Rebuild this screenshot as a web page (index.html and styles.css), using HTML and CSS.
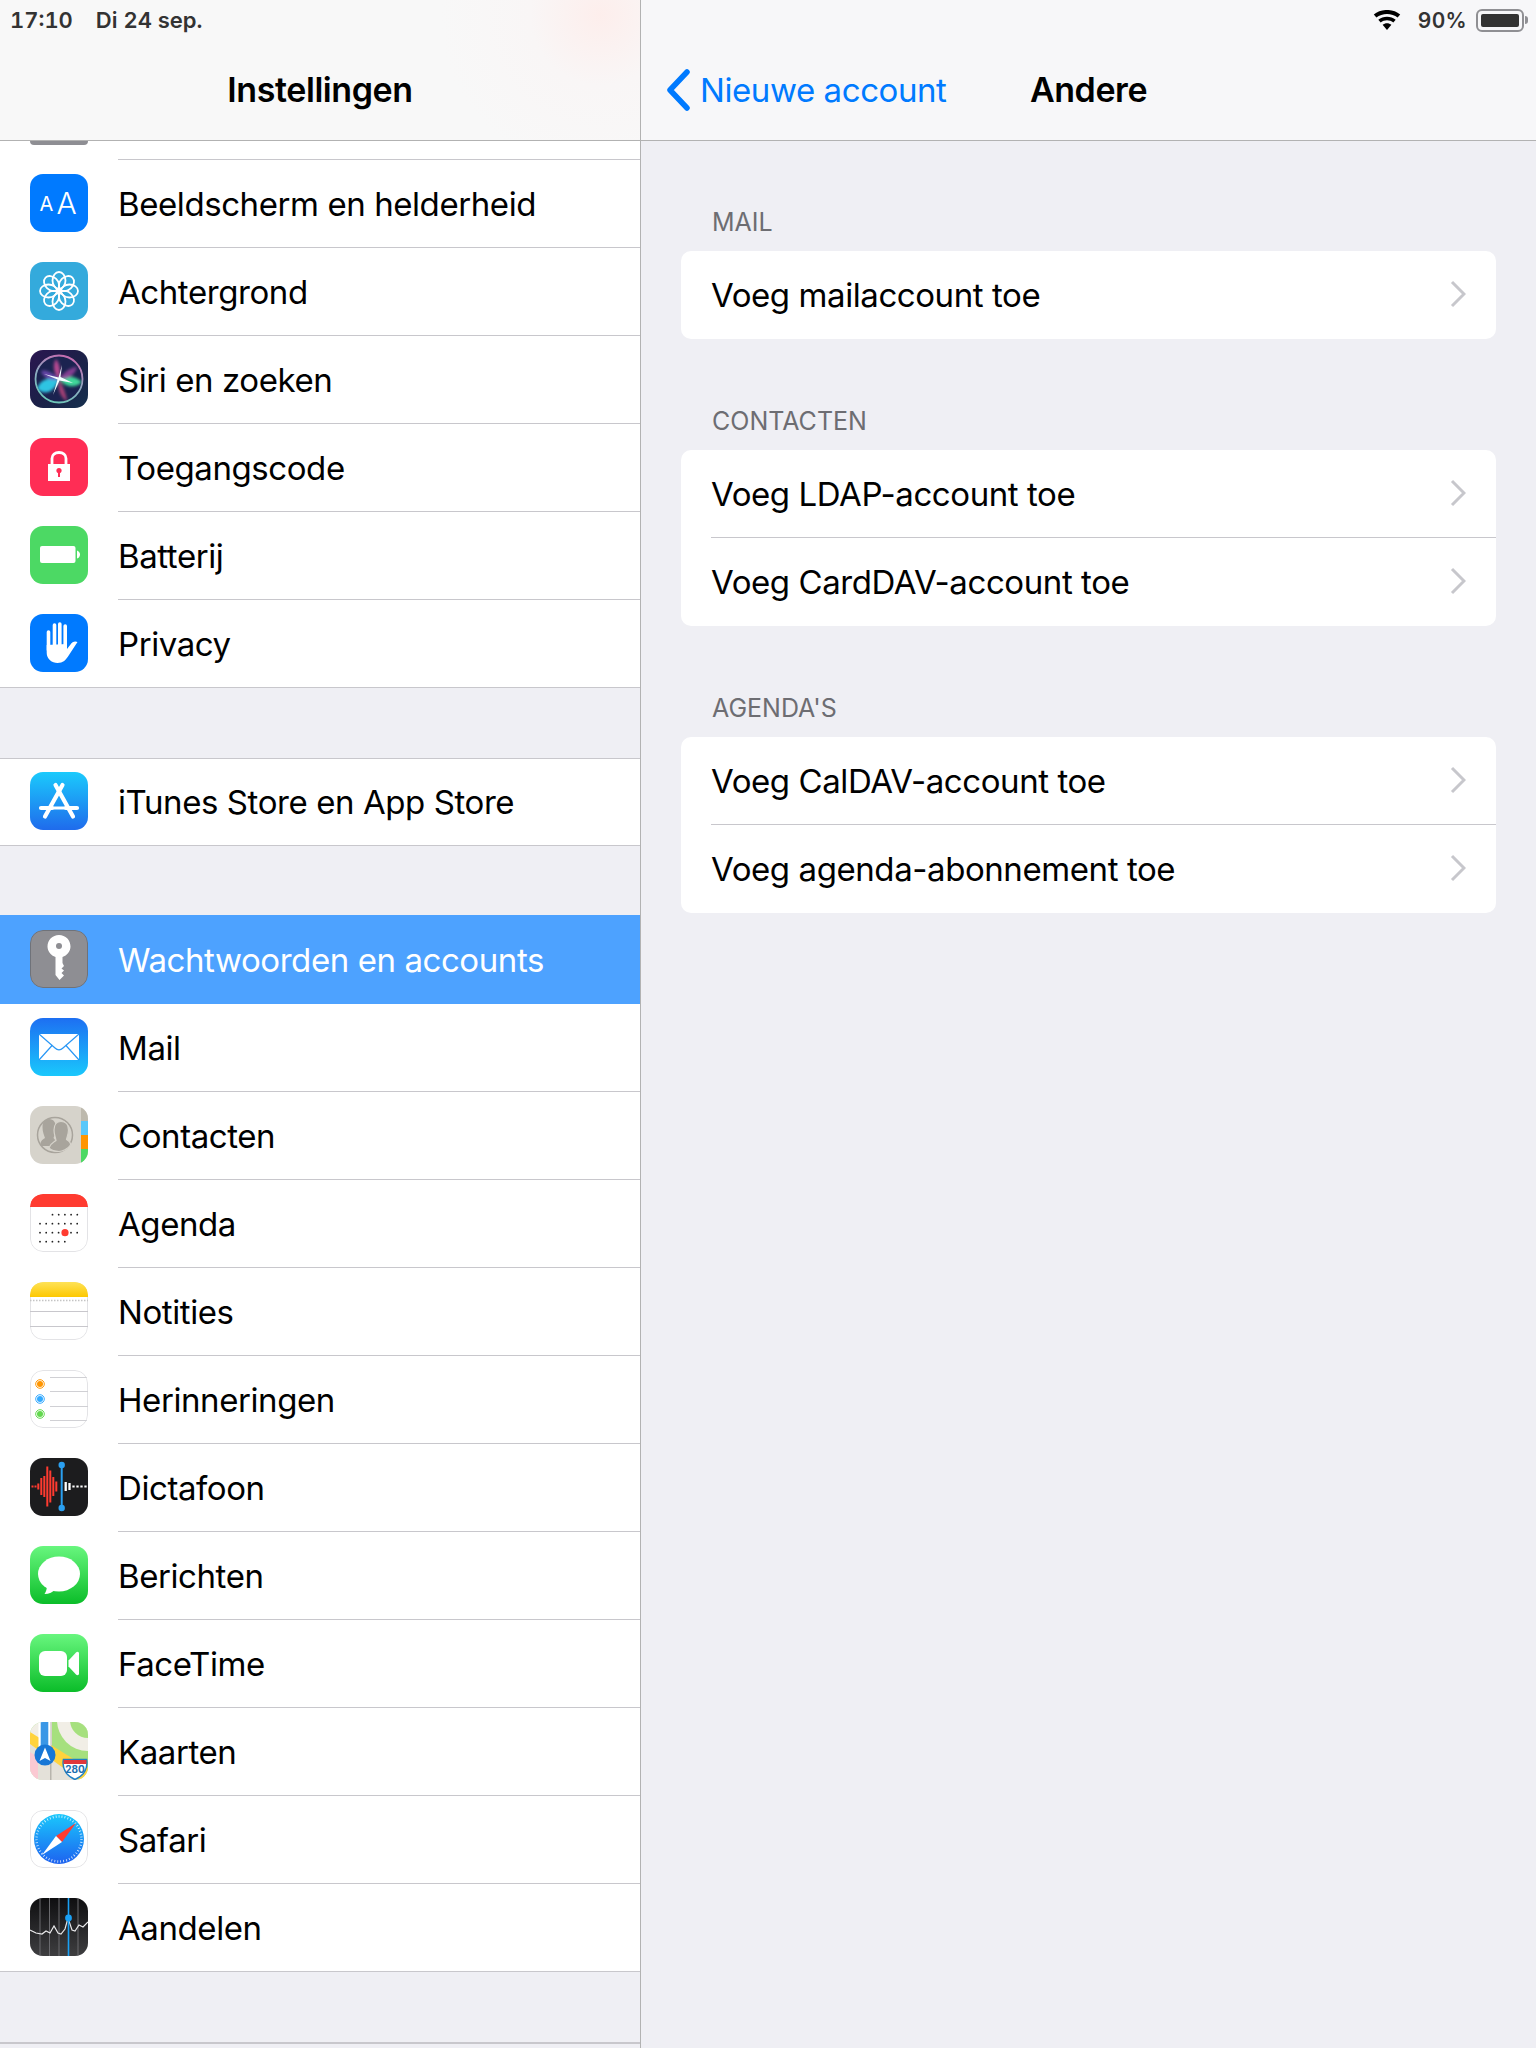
FILE: index.html
```html
<!DOCTYPE html>
<html lang="nl">
<head>
    <meta charset="UTF-8">
    <title>Instellingen</title>
    <link rel="stylesheet" href="styles.css">
</head>
<body>
<div class="screen">
    <aside class="sidebar">
        <header class="bar sidebar-bar">
            <div class="status">
                <span class="time">17:10</span>
                <span>Di 24 sep.</span>
            </div>
            <h1 class="nav-title">Instellingen</h1>
        </header>

        <div class="peek"><div class="peek-icon"></div></div>

        <div class="group first">
            <div class="row">
                <svg class="icon" viewBox="0 0 58 58"><rect width="58" height="58" fill="#007aff"/><text x="9.5" y="37" class="aa-s">A</text><text x="26.5" y="39.5" class="aa-l">A</text></svg>
                <div class="label">Beeldscherm en helderheid</div>
            </div>
            <div class="row">
                <svg class="icon" viewBox="0 0 58 58"><rect width="58" height="58" fill="#34aadc"/><g fill="none" stroke="#fff" stroke-width="1.8"><ellipse cx="29" cy="18.5" rx="6.5" ry="8.5"/><ellipse cx="29" cy="18.5" rx="6.5" ry="8.5" transform="rotate(45 29 29)"/><ellipse cx="29" cy="18.5" rx="6.5" ry="8.5" transform="rotate(90 29 29)"/><ellipse cx="29" cy="18.5" rx="6.5" ry="8.5" transform="rotate(135 29 29)"/><ellipse cx="29" cy="18.5" rx="6.5" ry="8.5" transform="rotate(180 29 29)"/><ellipse cx="29" cy="18.5" rx="6.5" ry="8.5" transform="rotate(225 29 29)"/><ellipse cx="29" cy="18.5" rx="6.5" ry="8.5" transform="rotate(270 29 29)"/><ellipse cx="29" cy="18.5" rx="6.5" ry="8.5" transform="rotate(315 29 29)"/></g><circle cx="29" cy="29" r="3" fill="#fff"/></svg>
                <div class="label">Achtergrond</div>
            </div>
            <div class="row">
                <svg class="icon" viewBox="0 0 58 58">
                    <defs>
                        <linearGradient id="siriBg" x1="0" y1="0" x2="1" y2="1"><stop offset="0" stop-color="#2a1650"/><stop offset=".5" stop-color="#1c2048"/><stop offset="1" stop-color="#15304e"/></linearGradient>
                        <linearGradient id="siriRing" x1=".7" y1="0" x2=".3" y2="1"><stop offset="0" stop-color="#c86ab0"/><stop offset=".5" stop-color="#8fa8c0"/><stop offset="1" stop-color="#6ccab8"/></linearGradient>
                        <filter id="siriBlur" x="-20%" y="-20%" width="140%" height="140%"><feGaussianBlur stdDeviation="1.4"/></filter>
                        <clipPath id="siriClip"><circle cx="29" cy="29" r="23"/></clipPath>
                    </defs>
                    <rect width="58" height="58" fill="url(#siriBg)"/>
                    <circle cx="29" cy="29" r="23.5" fill="#1b2350" stroke="url(#siriRing)" stroke-width="1.8"/>
                    <g clip-path="url(#siriClip)" filter="url(#siriBlur)">
                        <path d="M29 29C20 26 9 30 7 39C16 47 26 40 29 29Z" fill="#2fc4e2"/>
                        <path d="M29 29C36 25 45 26 52 32C45 39 35 37 29 29Z" fill="#3fd79a"/>
                        <path d="M29 29C33 36 36 44 37 51C31 48 27 40 29 29Z" fill="#c8487e" opacity=".8"/>
                        <path d="M29 29C34 22 41 17 47 17C45 25 37 31 29 29Z" fill="#a848a8" opacity=".75"/>
                        <path d="M29 29C23 23 16 19 11 21C13 28 22 32 29 29Z" fill="#7a50c0" opacity=".8"/>
                        <path d="M29 29C31 22 30 14 26 9C22 15 24 24 29 29Z" fill="#d0509c" opacity=".85"/>
                    </g>
                    <path d="M32 15L30.5 27L43 33L29.5 30.5L23 45L27.5 29.5L14 24L28.5 27.5Z" fill="#f2fdff"/>
                </svg>
                <div class="label">Siri en zoeken</div>
            </div>
            <div class="row">
                <svg class="icon" viewBox="0 0 58 58"><rect width="58" height="58" fill="#ff2d55"/><path d="M22 27V20.5C22 16.5 25 14.5 29 14.5C33 14.5 36 16.5 36 20.5V27" fill="none" stroke="#fff" stroke-width="2.8"/><rect x="18" y="26" width="22" height="17" fill="#fff"/><circle cx="29" cy="32.5" r="2.6" fill="#ff2d55"/><rect x="28" y="33" width="2" height="6" fill="#ff2d55"/></svg>
                <div class="label">Toegangscode</div>
            </div>
            <div class="row">
                <svg class="icon" viewBox="0 0 58 58"><rect width="58" height="58" fill="#4cd964"/><rect x="10" y="20" width="35.5" height="17" rx="2" fill="#fff"/><path d="M47 24.5C49 25 50 27 50 28.5C50 30 49 32 47 32.5Z" fill="#fff"/></svg>
                <div class="label">Batterij</div>
            </div>
            <div class="row">
                <svg class="icon" viewBox="0 0 58 58"><rect width="58" height="58" fill="#007aff"/><g stroke="#fff" stroke-width="3.6" stroke-linecap="round"><path d="M18.5 18V36"/><path d="M24.5 11V36"/><path d="M29.8 10V36"/><path d="M35.2 12V38"/></g><path d="M16.7 31V39C16.7 45 22 49 27.5 49C33 49 36 46 39 41L47.5 28C45 26.5 42 28 40.5 30.5L37 35V30Z" fill="#fff"/></svg>
                <div class="label">Privacy</div>
            </div>
        </div>

        <div class="group">
            <div class="row short">
                <svg class="icon" viewBox="0 0 58 58"><defs><linearGradient id="storeBg" x1="0" y1="0" x2="0" y2="1"><stop offset="0" stop-color="#1bcafc"/><stop offset="1" stop-color="#1f6bec"/></linearGradient></defs><rect width="58" height="58" fill="url(#storeBg)"/><g stroke="#fff" stroke-width="4.2" stroke-linecap="round" fill="none"><path d="M32.5 13L15 44.5"/><path d="M25.5 13L43 44.5"/><path d="M11 36H22M36 36H47"/><path d="M20 36H38" stroke-width="3"/></g></svg>
                <div class="label">iTunes Store en App Store</div>
            </div>
        </div>

        <div class="group flush">
            <div class="row selected">
                <svg class="icon" viewBox="0 0 58 58"><rect x=".5" y=".5" width="57" height="57" rx="12.5" fill="#8e8e93" stroke="#6f7279"/><path d="M29 5C22.5 5 17.5 10 17.5 16.5C17.5 21.5 21 25.5 25.5 27V45L29.5 50L34 45.5L31.5 43L34 40.5L31.5 38.5L34 36L32.5 33V27C37 25.5 40.5 21.5 40.5 16.5C40.5 10 35.5 5 29 5Z" fill="#fff"/><circle cx="29" cy="16" r="3" fill="#8e8e93"/></svg>
                <div class="label">Wachtwoorden en accounts</div>
            </div>
            <div class="row">
                <svg class="icon" viewBox="0 0 58 58"><defs><linearGradient id="mailBg" x1="0" y1="0" x2="0" y2="1"><stop offset="0" stop-color="#1d6ff2"/><stop offset="1" stop-color="#1ac8fc"/></linearGradient></defs><rect width="58" height="58" fill="url(#mailBg)"/><rect x="9" y="16" width="40" height="26" rx="1" fill="#fff"/><path d="M9 16L25 30C27.5 32.5 30.5 32.5 33 30L49 16M9 42L22.5 27M49 42L35.5 27" fill="none" stroke="#2a97f5" stroke-width="1.2"/></svg>
                <div class="label">Mail</div>
            </div>
            <div class="row">
                <svg class="icon" viewBox="0 0 58 58"><rect width="58" height="58" fill="#d6d3cb"/><rect x="51" width="7" height="15" fill="#bdb9ad"/><rect x="51" y="15" width="7" height="14" fill="#5ac8fa"/><rect x="51" y="29" width="7" height="14" fill="#ff9500"/><rect x="51" y="43" width="7" height="15" fill="#4cd964"/><circle cx="25" cy="29" r="17.5" fill="none" stroke="#a8a49c" stroke-width="1.5"/><path d="M19 13C24 13 26 17 26 22C26 27 24 30 23.5 32C26 35 27 36 24 40H11C9.5 36 12 34 15 32C14 29 12.5 26 12.5 21C12.5 16 15 13 19 13Z" fill="#a8a49c"/><path d="M31 15.5C36 15.5 38.5 19 38.5 24C38.5 28 37 31 36.5 33.5C39 35 41 36.5 40.5 39C38 43 32 45.5 29 45.5C25 45.5 21 44 19 42C21 37 24 36 26 34.5C25.5 31 24 29 24 24C24 19 26.5 15.5 31 15.5Z" fill="#a8a49c" stroke="#d6d3cb" stroke-width="1.2"/></svg>
                <div class="label">Contacten</div>
            </div>
            <div class="row">
                <svg class="icon" viewBox="0 0 58 58"><rect x=".5" y=".5" width="57" height="57" rx="12.5" fill="#fff" stroke="#e3e3e6"/><path d="M0 13C0 5 5 0 13 0H45C53 0 58 5 58 13Z" fill="#ff3b30"/><g stroke="#222" stroke-width="1.8" stroke-linecap="round" stroke-dasharray="0 6.2"><path d="M22.5 20.7H48"/><path d="M10 29.7H48"/><path d="M10 38.7H48"/><path d="M10 47.7H36"/></g><circle cx="35" cy="38.7" r="3.6" fill="#ff3b30"/></svg>
                <div class="label">Agenda</div>
            </div>
            <div class="row">
                <svg class="icon" viewBox="0 0 58 58"><defs><linearGradient id="noteBg" x1="0" y1="0" x2="0" y2="1"><stop offset="0" stop-color="#fee257"/><stop offset="1" stop-color="#fdc800"/></linearGradient></defs><rect x=".5" y=".5" width="57" height="57" rx="12.5" fill="#fff" stroke="#e3e3e6"/><path d="M0 15V13C0 5 5 0 13 0H45C53 0 58 5 58 13V15Z" fill="url(#noteBg)"/><path d="M0 18.5H58" stroke="#c4c4c4" stroke-width="1.5" stroke-dasharray="1.5 1.5"/><path d="M0 29.5H58M0 44.5H58" stroke="#c8c7cc" stroke-width="1"/></svg>
                <div class="label">Notities</div>
            </div>
            <div class="row">
                <svg class="icon" viewBox="0 0 58 58"><rect x=".5" y=".5" width="57" height="57" rx="12.5" fill="#fff" stroke="#e3e3e6"/><path d="M20 7.5H58M20 21.5H58M20 36.5H58M20 50.5H58" stroke="#d0d0d4" stroke-width="1"/><circle cx="10" cy="14" r="4.3" fill="#fff" stroke="#ff9500" stroke-width="1"/><circle cx="10" cy="14" r="3" fill="#ff9500"/><circle cx="10" cy="29" r="4.3" fill="#fff" stroke="#34aaff" stroke-width="1"/><circle cx="10" cy="29" r="3" fill="#34aaff"/><circle cx="10" cy="44" r="4.3" fill="#fff" stroke="#62d84e" stroke-width="1"/><circle cx="10" cy="44" r="3" fill="#62d84e"/></svg>
                <div class="label">Herinneringen</div>
            </div>
            <div class="row">
                <svg class="icon" viewBox="0 0 58 58"><rect width="58" height="58" fill="#1c1c1e"/><path d="M1.5 28.5H3.5M4.5 28.5H6.5M8.3 25.5V31.5M11.3 20V37M14.3 18V39M17.3 8.5V48.5M20.3 12.5V44.5M23.3 19V38M26.3 23.5V33.5" stroke="#ff3b30" stroke-width="2" fill="none"/><path d="M31.7 7V50" stroke="#2a9ff0" stroke-width="2"/><circle cx="31.7" cy="7" r="3.2" fill="#2a9ff0"/><circle cx="31.7" cy="50" r="3.2" fill="#2a9ff0"/><path d="M35.7 24V33M39.5 25V32M43.5 27.5V29.5M47.5 27.5V29.5M51.5 27.5V29.5M55.5 27.5V29.5" stroke="#fff" stroke-width="2.3"/></svg>
                <div class="label">Dictafoon</div>
            </div>
            <div class="row">
                <svg class="icon" viewBox="0 0 58 58"><defs><linearGradient id="msgBg" x1="0" y1="0" x2="0" y2="1"><stop offset="0" stop-color="#68f67e"/><stop offset="1" stop-color="#0bbd29"/></linearGradient></defs><rect width="58" height="58" fill="url(#msgBg)"/><ellipse cx="29" cy="28" rx="21" ry="17.5" fill="#fff"/><path d="M17 39C17 43 16 46 14.5 48C19 48 23 46 26 43Z" fill="#fff"/></svg>
                <div class="label">Berichten</div>
            </div>
            <div class="row">
                <svg class="icon" viewBox="0 0 58 58"><defs><linearGradient id="ftBg" x1="0" y1="0" x2="0" y2="1"><stop offset="0" stop-color="#68f67e"/><stop offset="1" stop-color="#0bbd29"/></linearGradient></defs><rect width="58" height="58" fill="url(#ftBg)"/><rect x="9" y="17" width="28" height="25" rx="6" fill="#fff"/><path d="M38.5 26.5L46 18.5C47.5 17 49 18 49 19.5V39.5C49 41 47.5 42 46 40.5L38.5 32.5Z" fill="#fff"/></svg>
                <div class="label">FaceTime</div>
            </div>
            <div class="row">
                <svg class="icon" viewBox="0 0 58 58"><rect width="58" height="58" fill="#a6e07e"/><circle cx="58" cy="-2" r="31" fill="#f1eee6"/><circle cx="58" cy="-2" r="18" fill="#a6e07e"/><path d="M0 0H22V58H0Z" fill="#f1eee6"/><path d="M0 22L58 58H0Z" fill="#e4e1d9"/><path d="M0 10L58 46V58H50L0 22Z" fill="#ffd33d"/><path d="M0 30L8 35V58H5C2 58 0 55 0 50Z" fill="#fbc9d2"/><rect x="20" y="0" width="1.5" height="58" fill="#b8b5ad"/><rect x="8.5" y="0" width="12" height="36" fill="#fff"/><rect x="10.7" width="7.6" height="30" fill="#3a97e6"/><circle cx="15" cy="33" r="10.5" fill="#1777d6"/><path d="M15 25.5L20.5 39L15 36L9.5 39Z" fill="#fff"/><path d="M33.5 37.5H56.500C58 45 55 53 45 57.5C35 53 32 45 33.5 37.5Z" fill="#fff" stroke="#1e7fc4" stroke-width="1.6"/><path d="M33.5 38H56.5V42H33.5Z" fill="#e0373b"/><text x="45" y="51" class="shield">280</text></svg>
                <div class="label">Kaarten</div>
            </div>
            <div class="row">
                <svg class="icon" viewBox="0 0 58 58"><defs><linearGradient id="safBg" x1="0" y1="0" x2="0" y2="1"><stop offset="0" stop-color="#1ac8fc"/><stop offset="1" stop-color="#1d62f0"/></linearGradient></defs><rect x=".5" y=".5" width="57" height="57" rx="12.5" fill="#fff" stroke="#e3e3e6"/><circle cx="29" cy="29" r="25" fill="url(#safBg)"/><circle cx="29" cy="29" r="22.5" fill="none" stroke="#fff" stroke-width="2.4" stroke-dasharray=".8 2.2" opacity=".85"/><path d="M46 13L26 26L32 32Z" fill="#ff3b30"/><path d="M12 45L26 26L32 32Z" fill="#fff"/></svg>
                <div class="label">Safari</div>
            </div>
            <div class="row">
                <svg class="icon" viewBox="0 0 58 58"><defs><linearGradient id="stockBg" x1="0" y1="0" x2="0" y2="1"><stop offset="0" stop-color="#0e0e10"/><stop offset="1" stop-color="#3e3e40"/></linearGradient></defs><rect width="58" height="58" fill="url(#stockBg)"/><path d="M10 0V58M19.5 0V58M29 0V58M48 0V58" stroke="#6a6a6e" stroke-width="1"/><path d="M0 32L6 35L12 36L16 33L20 35L24 28L28 35L31 36L35 31L38 20L42 32L45 33L49 27L53 29L58 24" fill="none" stroke="#e8e8ea" stroke-width="1.2"/><path d="M38.5 0V58" stroke="#1aa0f5" stroke-width="1.6"/><circle cx="38.5" cy="20" r="3.4" fill="#1aa0f5"/></svg>
                <div class="label">Aandelen</div>
            </div>
        </div>

        <div class="group"></div>
    </aside>

    <main class="detail">
        <header class="bar detail-bar">
            <div class="status status-right">
                <svg class="wifi" viewBox="0 0 28 20"><path d="M14 20L9.6 14.8C12 12.7 16 12.7 18.4 14.8Z"/><path d="M7.7 12.6L5.3 9.8C10 5.7 18 5.7 22.7 9.8L20.3 12.6C16.8 9.6 11.2 9.6 7.7 12.6Z"/><path d="M3.4 7.5L.8 4.6C8 -1.6 20 -1.6 27.2 4.6L24.6 7.5C19 2.7 9 2.7 3.4 7.5Z"/></svg>
                <span class="battery-pct">90%</span>
                <span class="battery"><span class="battery-fill"></span></span>
                <span class="battery-nub"></span>
            </div>
            <div class="nav">
                <a class="back">
                    <svg class="back-chevron" viewBox="0 0 26 42"><path d="M22 3L5 21L22 39" fill="none" stroke="#007aff" stroke-width="5.5" stroke-linecap="round" stroke-linejoin="round"/></svg>
                    Nieuwe account
                </a>
                <h1 class="nav-title">Andere</h1>
            </div>
        </header>

        <section>
            <h2 class="section-title">Mail</h2>
            <div class="card">
                <div class="card-row">
                    <div class="card-label">Voeg mailaccount toe<svg class="chevron" viewBox="0 0 16 28"><path d="M2 2L14 14L2 26" fill="none" stroke="#c7c7cc" stroke-width="3"/></svg></div>
                </div>
            </div>
        </section>

        <section>
            <h2 class="section-title">Contacten</h2>
            <div class="card">
                <div class="card-row">
                    <div class="card-label">Voeg LDAP-account toe<svg class="chevron" viewBox="0 0 16 28"><path d="M2 2L14 14L2 26" fill="none" stroke="#c7c7cc" stroke-width="3"/></svg></div>
                </div>
                <div class="card-row">
                    <div class="card-label">Voeg CardDAV-account toe<svg class="chevron" viewBox="0 0 16 28"><path d="M2 2L14 14L2 26" fill="none" stroke="#c7c7cc" stroke-width="3"/></svg></div>
                </div>
            </div>
        </section>

        <section>
            <h2 class="section-title">Agenda's</h2>
            <div class="card">
                <div class="card-row">
                    <div class="card-label">Voeg CalDAV-account toe<svg class="chevron" viewBox="0 0 16 28"><path d="M2 2L14 14L2 26" fill="none" stroke="#c7c7cc" stroke-width="3"/></svg></div>
                </div>
                <div class="card-row">
                    <div class="card-label">Voeg agenda-abonnement toe<svg class="chevron" viewBox="0 0 16 28"><path d="M2 2L14 14L2 26" fill="none" stroke="#c7c7cc" stroke-width="3"/></svg></div>
                </div>
            </div>
        </section>
    </main>
</div>
</body>
</html>
```

FILE: styles.css
```css
* {
    box-sizing: border-box;
}
html, body {
    margin: 0;
    height: 100%;
    overflow: hidden;
}
body {
    font-family: Inter, "Noto Sans", sans-serif;
    font-size: 33px;
    letter-spacing: -0.42px;
    color: #000;
    background: #efeff4;
}
.screen {
    display: flex;
    height: 2048px;
}
.sidebar {
    width: 641px;
    height: 2048px;
    overflow: hidden;
    border-right: 1px solid #b2b2b2;
    background: #efeff4;
}
.detail {
    flex: 1;
}

/* top bars */
.bar {
    height: 141px;
    border-bottom: 1px solid #b2b2b2;
    background: #f7f7f9;
}
.sidebar-bar {
    background: radial-gradient(circle at 600px 15px, #fdeeec 0, #f9f6f6 70px, #f8f8f8 160px);
}
.status {
    display: flex;
    align-items: center;
    gap: 23px;
    height: 40px;
    padding-left: 10px;
    font-size: 22px;
    font-weight: 600;
    letter-spacing: 0;
    font-variant-numeric: tabular-nums;
    color: #333;
}
.status-right {
    justify-content: flex-end;
    gap: 0;
    padding: 0 8px 0 0;
}
.wifi {
    width: 28px;
    height: 20px;
    margin-right: 17px;
}
.battery-pct {
    margin-right: 9px;
    font-size: 21px;
    letter-spacing: 0.3px;
}
.battery {
    width: 48px;
    height: 23px;
    padding: 3px;
    border: 2px solid #8f8f93;
    border-radius: 6px;
}
.battery-fill {
    display: block;
    height: 100%;
    background: #333;
    border-radius: 2px;
}
.battery-nub {
    width: 3px;
    height: 8px;
    margin-left: 1px;
    background: #8f8f93;
    border-radius: 0 3px 3px 0;
}
.nav-title {
    margin: 0;
    height: 100px;
    font-size: 34px;
    font-weight: 600;
    line-height: 100px;
    text-align: center;
}
.nav {
    position: relative;
}
.back {
    position: absolute;
    left: 24px;
    top: 0;
    display: flex;
    align-items: center;
    gap: 9px;
    height: 100px;
    color: #007aff;
}
.back-chevron {
    width: 26px;
    height: 42px;
}

/* settings list */
.peek {
    position: relative;
    height: 19px;
    padding-left: 30px;
    background: #fff;
}
.peek::after {
    content: "";
    position: absolute;
    left: 118px;
    right: 0;
    bottom: 0;
    border-bottom: 1px solid #c8c7cc;
}
.peek-icon {
    width: 58px;
    height: 4px;
    background: #8e8e93;
    border-radius: 0 0 8px 8px;
}
.group {
    margin-top: 70px;
    border-top: 1px solid #c8c7cc;
    border-bottom: 1px solid #c8c7cc;
    background: #fff;
}
.group.first {
    margin-top: 0;
    border-top: 0;
}
.group.flush {
    margin-top: 69px;
    border-top: 0;
}
.row {
    display: flex;
    align-items: center;
    height: 88px;
    padding-left: 30px;
}
.row:last-child {
    height: 87px;
}
.row.short {
    height: 86px;
}
.row.selected {
    height: 89px;
    background: #4da2ff;
    color: #fff;
}
.icon {
    flex: none;
    width: 58px;
    height: 58px;
    margin-bottom: 2px;
    border-radius: 13px;
}
.row:last-child .icon,
.row.selected .icon {
    margin-bottom: 1px;
}
.row.short .icon {
    margin-bottom: 2px;
}
.label {
    display: flex;
    align-items: center;
    flex: 1;
    height: 100%;
    margin-left: 30px;
    border-bottom: 1px solid #c8c7cc;
}
.row:last-child .label,
.row.selected .label {
    border-bottom: 0;
}
.aa-s {
    font-size: 20px;
    fill: #fff;
    letter-spacing: 0;
}
.aa-l {
    font-size: 30px;
    font-weight: 300;
    fill: #fff;
    letter-spacing: 0;
}
.shield {
    font-size: 10px;
    font-weight: 700;
    fill: #1e6fb0;
    text-anchor: middle;
    letter-spacing: 0;
}

/* detail sections */
.section-title {
    display: flex;
    align-items: flex-end;
    height: 110px;
    margin: 0;
    padding: 0 0 16px 71px;
    font-size: 25px;
    font-weight: 400;
    line-height: 26px;
    letter-spacing: 0;
    text-transform: uppercase;
    color: #6d6d72;
}
section + section {
    margin-top: 1px;
}
.card {
    margin: 0 40px;
    background: #fff;
    border-radius: 10px;
    overflow: hidden;
}
.card-row {
    height: 88px;
    padding-left: 30px;
}
.card-label {
    display: flex;
    align-items: center;
    justify-content: space-between;
    height: 100%;
    padding-right: 30px;
    border-bottom: 1px solid #c8c7cc;
}
.card-row:last-child .card-label {
    border-bottom: 0;
}
.chevron {
    width: 16px;
    height: 28px;
    margin-bottom: 2px;
}
```
